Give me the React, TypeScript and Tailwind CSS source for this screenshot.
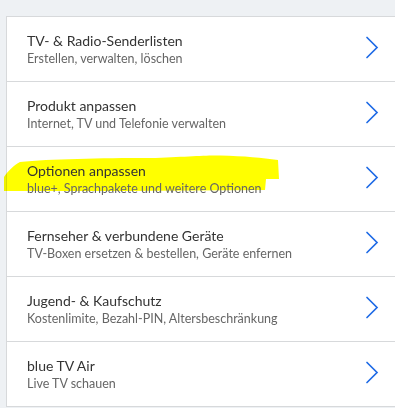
import React from "react";

const ITEMS = [
  { title: "TV- & Radio-Senderlisten", subtitle: "Erstellen, verwalten, löschen" },
  { title: "Produkt anpassen", subtitle: "Internet, TV und Telefonie verwalten" },
  { title: "Optionen anpassen", subtitle: "blue+, Sprachpakete und weitere Optionen", marked: true },
  { title: "Fernseher & verbundene Geräte", subtitle: "TV-Boxen ersetzen & bestellen, Geräte enfernen" },
  { title: "Jugend- & Kaufschutz", subtitle: "Kostenlimite, Bezahl-PIN, Altersbeschränkung" },
  { title: "blue TV Air", subtitle: "Live TV schauen" },
];

function Chevron() {
  return (
    <svg width="14" height="23" viewBox="0 0 14 23" fill="none" className="shrink-0">
      <path d="M2 1.5 L12 11.5 L2 21.5" stroke="#1f6be6" strokeWidth="1.7" strokeLinecap="round" strokeLinejoin="miter" />
    </svg>
  );
}

function Marker() {
  // hand-drawn highlighter stroke over the third row
  return (
    <svg className="pointer-events-none absolute left-[-7px] top-0 mix-blend-multiply" width="290" height="50" viewBox="0 0 290 50">
      <path
        d="M4 30 C8 24 14 18 20 15 C50 12 100 11 150 11 C185 10 205 8 220 8.5 C245 9 262 11 278 13 L279 32 L266 32 L265 43 L120 44 L4 44 Z"
        fill="#ffff00"
      />
    </svg>
  );
}

export default function App() {
  return (
    <div className="h-[408px] w-[395px] overflow-hidden bg-[#eef1f4] pt-4 pl-[6px] font-['Lato','Open_Sans',sans-serif]">
      <div className="border-l border-t border-[#d7d9db] bg-white">
        {ITEMS.map((item) => (
          <div key={item.title} className="relative flex h-[65px] items-center border-b border-[#d7d9db] pl-5 pr-[16px]">
            {item.marked && <Marker />}
            <div className="relative flex-1 min-w-0">
              <p className="text-[14px] leading-[19px] text-[#333]">{item.title}</p>
              <p className="text-[12.5px] leading-[17px] text-[#666]">{item.subtitle}</p>
            </div>
            <div className="pb-[3px]">
              <Chevron />
            </div>
          </div>
        ))}
      </div>
    </div>
  );
}
